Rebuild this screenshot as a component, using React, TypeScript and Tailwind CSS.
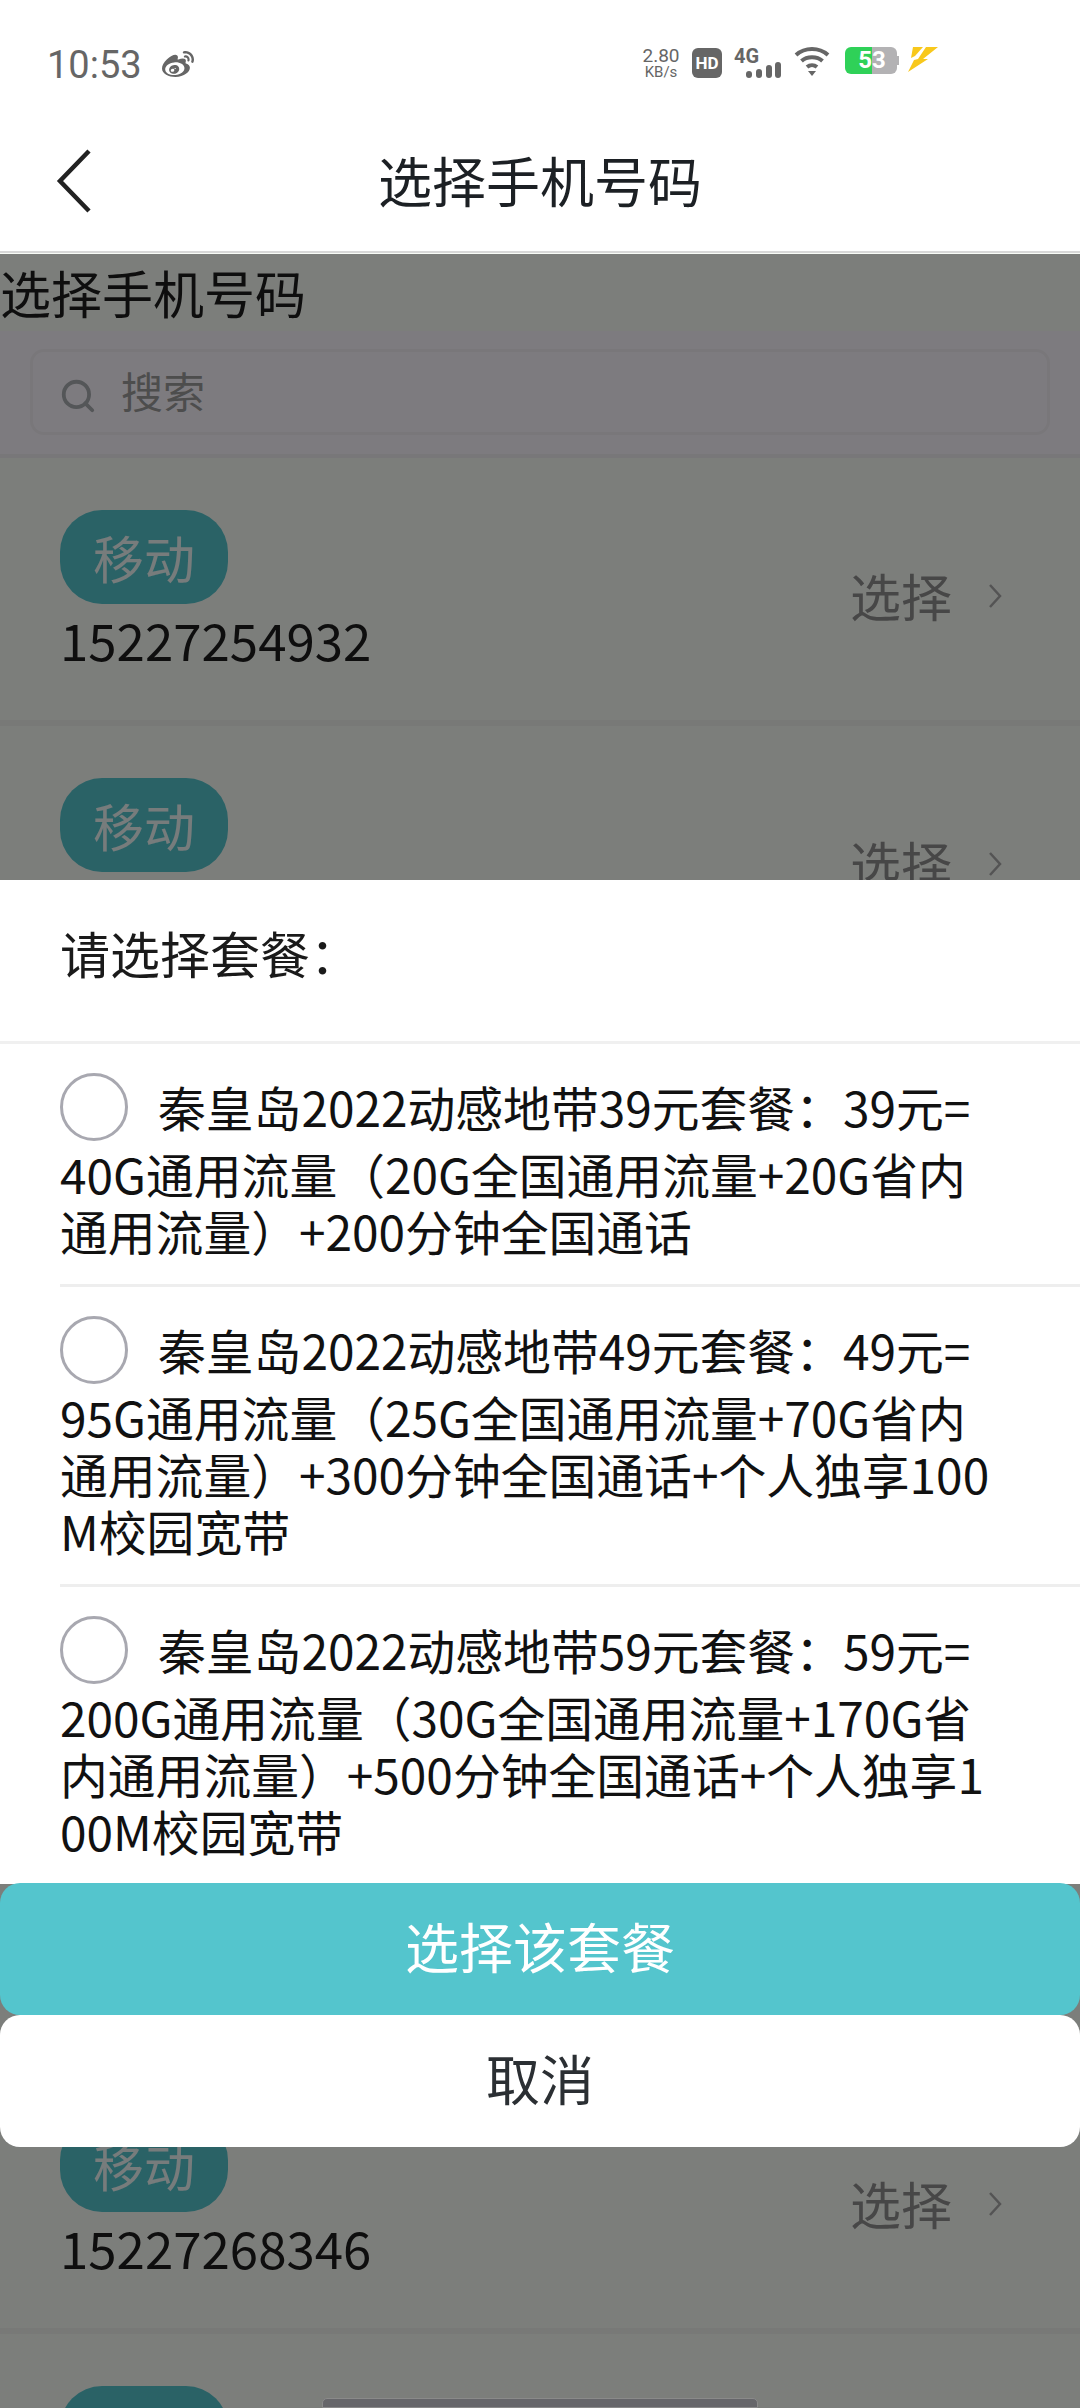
import { Search } from "lucide-react";
import { FaWeibo } from "react-icons/fa";

const phones = [
  "15227254932",
  "15227254932",
  "15227254932",
  "15227254932",
  "15227254932",
  "15227254932",
  "15227268346",
  "15227268346",
];

const plans = [
  {
    id: 39,
    lines: ["秦皇岛2022动感地带39元套餐：39元=", "40G通用流量（20G全国通用流量+20G省内", "通用流量）+200分钟全国通话"],
  },
  {
    id: 49,
    lines: ["秦皇岛2022动感地带49元套餐：49元=", "95G通用流量（25G全国通用流量+70G省内", "通用流量）+300分钟全国通话+个人独享100", "M校园宽带"],
  },
  {
    id: 59,
    lines: ["秦皇岛2022动感地带59元套餐：59元=", "200G通用流量（30G全国通用流量+170G省", "内通用流量）+500分钟全国通话+个人独享1", "00M校园宽带"],
  },
];

function StatusBar() {
  return (
    <div className="h-[115px] flex items-start justify-between pt-[46px] pl-[47px] pr-[142px]">
      <div className="flex items-center gap-[20px] text-[#666666]">
        <span className="text-[38px] leading-[38px] font-['Roboto',sans-serif]">10:53</span>
        <FaWeibo className="w-[32px] h-[32px] text-[#666666]" />
      </div>
      <div className="flex items-start text-[#666666] pt-[2px]">
        <div className="w-[38px] flex flex-col items-center font-['Roboto',sans-serif] -mt-[1px]">
          <span className="text-[19px] leading-[18px]">2.80</span>
          <span className="text-[15px] leading-[15px]">KB/s</span>
        </div>
        <div className="ml-[12px] w-[30px] h-[30px] rounded-[6px] bg-[#666666] text-white text-[17px] leading-[30px] font-bold text-center font-['Roboto',sans-serif]">
          HD
        </div>
        <div className="ml-[12px] w-[47px] h-[30px] relative">
          <span className="absolute left-0 -top-[2px] text-[20px] leading-[20px] font-bold font-['Roboto',sans-serif]">4G</span>
          <svg className="absolute left-[12px] top-[14px]" width="35" height="16" viewBox="0 0 35 16" fill="#666666">
            <rect x="0" y="9" width="6" height="7" rx="3" />
            <rect x="10" y="7" width="6" height="9" rx="3" />
            <rect x="20" y="3" width="6" height="13" rx="3" />
            <rect x="29" y="0" width="6" height="16" rx="3" />
          </svg>
        </div>
        <svg className="ml-[13px] -mt-[2px]" width="36" height="30" viewBox="0 0 36 30" fill="none" stroke="#666666" strokeWidth="4">
          <path d="M2 9 C11 1 25 1 34 9" />
          <path d="M7.5 15 C13 10 23 10 28.5 15" />
          <path d="M13 21 C16 18.5 20 18.5 23 21" />
          <path d="M14 25 L18 30 L22 25 Z" fill="#666666" stroke="none" />
        </svg>
        <div className="ml-[15px] relative w-[54px] h-[27px] -mt-[1px]">
          <div className="absolute left-0 top-0 w-[27px] h-[27px] rounded-l-[6px] bg-[#2fd158]" />
          <div className="absolute left-[27px] top-0 w-[25px] h-[27px] rounded-r-[6px] bg-[#b3b2b4]" />
          <div className="absolute right-0 top-[9px] w-[2px] h-[9px] bg-[#b3b2b4]" />
          <div className="absolute left-[10px] top-0 w-[34px] text-center text-white text-[24px] leading-[27px] font-bold font-['Roboto',sans-serif]">
            53
          </div>
        </div>
        <svg className="ml-[8px] -mt-[2px]" width="31" height="27" viewBox="0 0 31 27" fill="#f8c81c">
          <path d="M6 1 H16 L8 10 L4 12 Z" />
          <path d="M19 1 H31 L16 13 H21 L1 26 L7 14 L11 13 Z" />
        </svg>
      </div>
    </div>
  );
}

function PhoneRow({ phone }: { phone: string }) {
  return (
    <div className="h-[268px] shrink-0 border-b-[6px] border-[#f0f3ee] pl-[60px] pr-[78px] pt-[52px] flex justify-between bg-[#f9fcf7]">
      <div>
        <div className="w-[168px] h-[94px] rounded-[42px] bg-[#54c5cd] text-[#eef8f8] text-[51px] leading-[94px] text-center">
          移动
        </div>
        <div className="mt-[7px] text-[51px] leading-[56px] text-[#1c1c1c]">{phone}</div>
      </div>
      <div className="flex items-center gap-[36px] h-[172px] text-[#8f8f8f]">
        <span className="text-[51px] -mt-[2px]">选择</span>
        <svg width="14" height="26" viewBox="0 0 14 26" fill="none" stroke="#a8a8a8" strokeWidth="2.5">
          <path d="M2 2 L12 13 L2 24" />
        </svg>
      </div>
    </div>
  );
}

function PlanItem({ lines, last }: { lines: string[]; last: boolean }) {
  return (
    <div className={`ml-[60px] pt-[28px] pb-[25px] ${last ? "" : "border-b-[3px] border-[#eeeeee]"}`}>
      <div className="flex items-center h-[70px] text-[#111111] text-[47.8px]">
        <div className="w-[68px] h-[68px] rounded-full border-[3px] border-[#a8a8b0] mr-[30px] shrink-0" />
        <span className="whitespace-nowrap">{lines[0]}</span>
      </div>
      <div className="mt-[3px] text-[#111111] text-[47.8px] leading-[57px]">
        {lines.slice(1).map((line) => (
          <div key={line} className="whitespace-nowrap">{line}</div>
        ))}
      </div>
    </div>
  );
}

export default function App() {
  return (
    <div className="relative w-[1080px] h-[2408px] overflow-hidden bg-white font-['Noto_Sans_CJK_SC','Noto_Sans',sans-serif]">
      <StatusBar />
      <div className="h-[138px] relative flex items-center justify-center border-b-[2px] border-[#d8d8d8]">
        <svg className="absolute left-[55px] top-[34px]" width="38" height="64" viewBox="0 0 38 64" fill="none" stroke="#222222" strokeWidth="4.5">
          <path d="M34 2 L5 32 L34 62" />
        </svg>
        <span className="text-[54px] leading-[54px] text-[#1c2024] -mt-[6px]">选择手机号码</span>
      </div>

      {/* page under the dim layer */}
      <div className="h-[78px] bg-[#f9fcf7] text-[51px] leading-[78px] text-[#1c1c1c]">选择手机号码</div>
      <div className="h-[127px] bg-[#fbf7ff] px-[30px] pt-[18px] border-b-[4px] border-[#f0eef2]">
        <div className="h-[86px] rounded-[14px] border-[3px] border-[#f2eff5] flex items-center pl-[26px] gap-[24px] text-[#9a9a9a] text-[42px]">
          <Search className="w-[38px] h-[38px] mt-[8px] text-[#a8acb0]" strokeWidth={2.4} />
          <span className="-mt-[5px]">搜索</span>
        </div>
      </div>
      <div className="flex flex-col">
        {phones.map((phone, i) => (
          <PhoneRow key={i} phone={phone} />
        ))}
      </div>

      <div className="absolute left-0 right-0 top-[254px] bottom-0 bg-black/50" />

      {/* bottom sheet */}
      <div className="absolute left-0 right-0 top-[880px] bg-white">
        <div className="h-[164px] pl-[60px] pt-[34px] border-b-[3px] border-[#f0f0f0] text-[50px] leading-[76px] text-[#1a1a1a]">
          请选择套餐：
        </div>
        <div className="h-[840px]">
          {plans.map((plan, i) => (
            <PlanItem key={plan.id} lines={plan.lines} last={i === plans.length - 1} />
          ))}
        </div>
      </div>
      <div className="absolute left-0 right-0 top-[1883px]">
        <div className="h-[132px] rounded-[20px] bg-[#54c5cd] text-white text-[54px] leading-[54px] pb-[6px] flex items-center justify-center">
          选择该套餐
        </div>
        <div className="h-[132px] rounded-[20px] bg-white text-[#2b2f33] text-[54px] leading-[54px] pb-[6px] flex items-center justify-center">
          取消
        </div>
      </div>

      <div className="absolute left-[322px] top-[2398px] w-[436px] h-[10px] rounded-t-[5px] bg-[#66666a] border border-[#8a8a8a]" />
    </div>
  );
}
